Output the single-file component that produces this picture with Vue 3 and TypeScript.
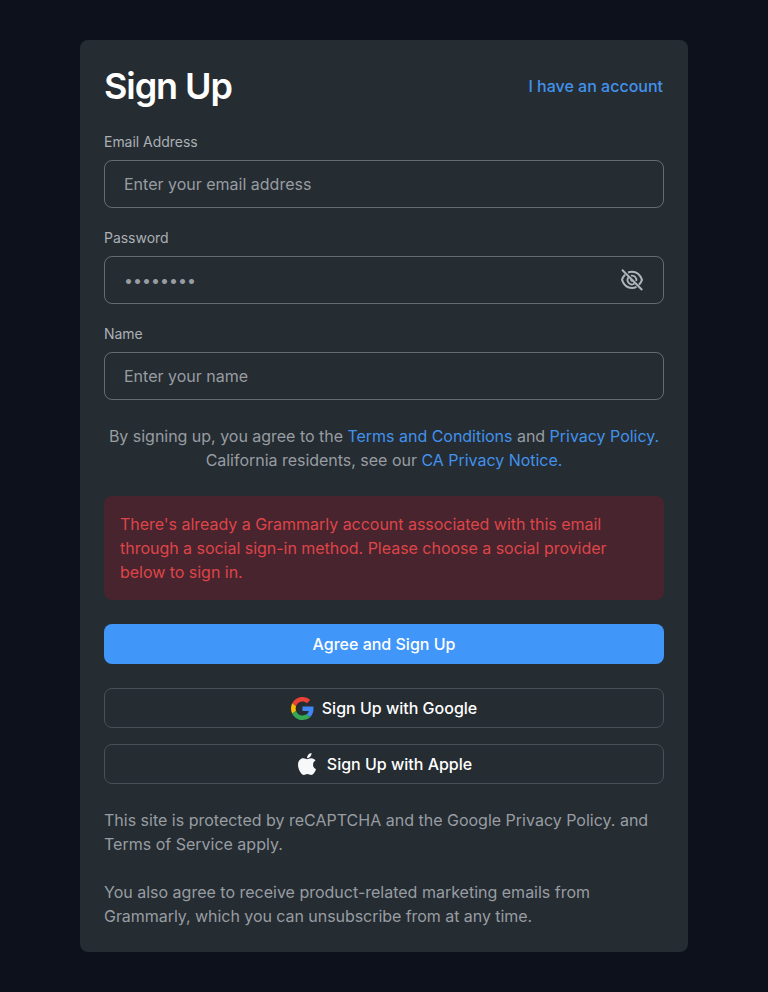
<script setup lang="ts">
import { ref } from 'vue'

const email = ref('')
const password = ref('')
const name = ref('')
const visible = ref(false)
</script>

<template>
  <main class="page">
    <form class="card" @submit.prevent>
      <header class="head">
        <h1>Sign Up</h1>
        <a class="account" href="#">I have an account</a>
      </header>

      <label class="field">
        <span class="label">Email Address</span>
        <span class="box"><input v-model="email" type="email" placeholder="Enter your email address" /></span>
      </label>
      <label class="field">
        <span class="label">Password</span>
        <span class="box">
          <input v-model="password" :type="visible ? 'text' : 'password'" placeholder="••••••••" />
          <button class="eye" type="button" aria-label="Toggle password" @click="visible = !visible">
            <svg width="24" height="24" viewBox="0 0 24 24" fill="none" stroke="#b0b5ba" stroke-width="2">
              <path d="M8 4.500A11 11 0 0 1 12 3.800c4.600 0 8.200 3 10 8.100a12 12 0 0 1-3 4.800M5 6.800A12 12 0 0 0 2 11.900c1.800 5.100 5.400 8.100 10 8.100 1.700 0 3.200-.4 4.500-1.100" />
              <path stroke-width="1.800" d="M8.600 9.300A4.300 4.300 0 0 0 14.600 15.400M11 7.700A4.300 4.300 0 0 1 16.200 13" />
              <path stroke-width="1.200" d="M10.800 11.500A1.500 1.500 0 0 0 12.500 13.200" />
              <path d="M2 1.800 22.200 22" />
            </svg>
          </button>
        </span>
      </label>
      <label class="field">
        <span class="label">Name</span>
        <span class="box"><input v-model="name" type="text" placeholder="Enter your name" /></span>
      </label>

      <p class="terms">
        By signing up, you agree to the <a href="#">Terms and Conditions</a> and <a href="#">Privacy Policy.</a><br />
        California residents, see our <a href="#">CA Privacy Notice.</a>
      </p>

      <p class="alert" role="alert">
        There's already a Grammarly account associated with this email<br />
        through a social sign-in method. Please choose a social provider<br />
        below to sign in.
      </p>

      <button class="btn primary" type="submit">Agree and Sign Up</button>
      <button class="btn outline google" type="button">
        <svg width="23" height="23" viewBox="0 0 48 48">
          <path fill="#EA4335" d="M24 9.500c3.540 0 6.710 1.220 9.210 3.600l6.850-6.850C35.900 2.380 30.470 0 24 0 14.620 0 6.510 5.380 2.560 13.220l7.980 6.190C12.430 13.720 17.740 9.500 24 9.500z" />
          <path fill="#4285F4" d="M46.980 24.550c0-1.570-.15-3.090-.38-4.550H24v9.020h12.940c-.58 2.960-2.260 5.480-4.780 7.180l7.730 6c4.510-4.180 7.090-10.360 7.090-17.650z" />
          <path fill="#FBBC05" d="M10.530 28.590c-.48-1.450-.76-2.990-.76-4.590s.27-3.140.76-4.590l-7.980-6.190C.92 16.460 0 20.120 0 24c0 3.880.92 7.540 2.560 10.780l7.970-6.190z" />
          <path fill="#34A853" d="M24 48c6.480 0 11.930-2.130 15.890-5.810l-7.730-6c-2.150 1.450-4.920 2.300-8.160 2.300-6.260 0-11.570-4.220-13.470-9.910l-7.980 6.190C6.510 42.620 14.620 48 24 48z" />
        </svg>
        <span>Sign Up with Google</span>
      </button>
      <button class="btn outline apple" type="button">
        <svg width="18" height="22" viewBox="4 32 376 448" preserveAspectRatio="none">
          <path fill="#f6f8fa" d="M318.700 268.700c-.2-36.700 16.400-64.400 50-84.800-18.800-26.900-47.200-41.700-84.700-44.600-35.500-2.800-74.300 20.700-88.500 20.700-15 0-49.400-19.700-76.400-19.700C63.300 141.200 4 184.800 4 273.500q0 39.300 14.400 81.200c12.800 36.700 59 126.700 107.200 125.200 25.200-.6 43-17.900 75.800-17.900 31.800 0 48.300 17.900 76.400 17.900 48.600-.7 90.400-82.500 102.600-119.300-65.200-30.700-61.700-90-61.700-91.900zm-56.600-164.200c27.300-32.400 24.800-61.900 24-72.500-24.100 1.400-52 16.400-67.900 34.900-17.500 19.800-27.800 44.300-25.600 71.900 26.100 2 49.900-11.400 69.500-34.300z" />
        </svg>
        <span>Sign Up with Apple</span>
      </button>

      <div class="legal">
        <p>This site is protected by reCAPTCHA and the Google Privacy Policy. and<br />Terms of Service apply.</p>
        <p>You also agree to receive product-related marketing emails from<br /><span class="snug">Grammarly, which you can unsubscribe from at any time.</span></p>
      </div>
    </form>
  </main>
</template>

<style>
body { margin: 0; background: #0c111b; }
</style>

<style scoped>
* { box-sizing: border-box; }
.page { min-height: 992px; padding: 40px 80px; background: #0c111b; font-family: Inter, sans-serif; font-size: 16px; line-height: 24px; color: #989da2; }
.card { height: 912px; padding: 24px; border-radius: 8px; background: #252c32; display: flex; flex-direction: column; }
.head { height: 44px; display: flex; align-items: center; justify-content: space-between; margin-bottom: 24px; padding-right: 1px; }
h1 { margin: 0; font-size: 36px; line-height: 44px; font-weight: 600; letter-spacing: -1.08px; color: #fff; }
a { color: #4292ec; text-decoration: none; }
.account { font-weight: 500; }
.field { height: 72px; display: flex; flex-direction: column; gap: 8px; margin-bottom: 24px; }
.label { font-size: 14px; line-height: 20px; letter-spacing: -0.03px; color: #abb0b5; }
.box { height: 48px; flex: none; border: 1px solid #656b71; border-radius: 8px; display: flex; align-items: center; padding: 0 19px; }
input { flex: 1; min-width: 0; padding: 0; border: 0; outline: 0; background: none; font: inherit; color: #fff; }
input::placeholder { color: #989da2; opacity: 1; }
.eye { display: flex; padding: 0; border: 0; background: none; cursor: pointer; }
p { margin: 0; }
.terms { margin-top: 4px; text-align: center; letter-spacing: -0.02px; }
.alert { margin: 24px 0; padding: 16px; border-radius: 8px; background: #47242e; color: #df4449; letter-spacing: -0.025px; }
.btn { height: 40px; flex: none; display: flex; align-items: center; justify-content: center; gap: 8px; padding: 0; border-radius: 8px; border: 1px solid #495057; background: none; font: 500 16px/24px Inter, sans-serif; color: #fff; }
.primary { background: #4196fa; border: 0; margin-bottom: 24px; }
.google { margin-bottom: 16px; }
.apple { gap: 11px; padding-left: 2px; }
.legal { margin-top: 24px; display: flex; flex-direction: column; gap: 24px; }
.snug { letter-spacing: -0.05px; }
</style>
